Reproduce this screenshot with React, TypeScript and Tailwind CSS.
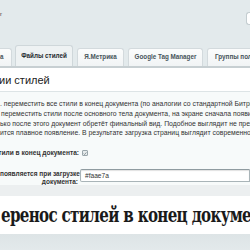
import React from "react";

const Tab = ({ label, active, className = "" }: { label: string; active?: boolean; className?: string }) => (
  <div
    className={
      "shrink-0 flex items-center justify-center rounded-t-[3px] border border-b-0 whitespace-nowrap " +
      (active
        ? "h-[21px] bg-[#eef2f3] border-[#cfd7da] text-[#1f2b30] font-bold"
        : "h-[18px] bg-gradient-to-b from-[#fbfcfc] to-[#f1f4f5] border-[#d3dadd] text-[#46545a] font-bold") +
      " " +
      className
    }
  >
    <span className="text-[6.3px] leading-none">{label}</span>
  </div>
);

export default function App() {
  return (
    <div
      className="w-[250px] h-[250px] overflow-hidden bg-[#e3eaec] flex flex-col"
      style={{ fontFamily: '"Liberation Sans", Arial, sans-serif' }}
    >
      {/* top area */}
      <div className="h-[45px] flex justify-between items-start pt-[11px] shrink-0">
        <span className="text-[6px] leading-none text-[#333]">г</span>
        <div className="w-[4px] h-[13px] mt-[1px] rounded-l-[3px] border border-r-0 border-[#c4cdd0] bg-white" />
      </div>

      {/* tabs */}
      <div className="h-[21px] flex items-end gap-[4px] shrink-0">
        <div className="shrink-0 h-[18px] w-[12px] flex items-center rounded-tr-[3px] border border-l-0 border-b-0 border-[#d3dadd] bg-gradient-to-b from-[#fbfcfc] to-[#f1f4f5]">
          <span className="text-[6.3px] leading-none font-bold text-[#46545a]">а</span>
        </div>
        <Tab label="Файлы стилей" active className="w-[58px] ml-[-1px]" />
        <Tab label="Я.Метрика" className="w-[47px]" />
        <Tab label="Google Tag Manager" className="w-[75px]" />
        <Tab label="Группы поле" className="w-[60px] justify-start pl-[7px]" />
      </div>
      <div className="h-[2px] bg-[#c7cfd2] shrink-0" />

      {/* content panel */}
      <div className="bg-white shrink-0 h-[117px] flex flex-col border-b border-[#d5dcde]">
        <div className="h-[24px] flex items-center border-b border-[#dde4e6] shrink-0">
          <span className="text-[11px] leading-none text-[#222] ml-[-1px] pt-[2px]">ии стилей</span>
        </div>
        <div className="bg-[#f7fafa] flex-1 flex flex-col">
          <div className="pt-[7px] text-[6.85px] leading-[9.8px] text-[#333] whitespace-nowrap">
            <div>. переместить все стили в конец документа (по аналогии со стандартной Битрикс</div>
            <div className="pl-[1px]">переместить стили после основного тела документа, на экране сначала появится</div>
            <div>ько после этого документ обретёт финальный вид. Подобное выглядит не презентабельно</div>
            <div>ится плавное появление. В результате загрузка страниц выглядит современно и</div>
          </div>
          <div className="mt-[10px] flex items-center h-[10px]">
            <div className="w-[79px] text-right text-[6.6px] font-bold text-[#333] whitespace-nowrap overflow-hidden flex justify-end">
              <span>стили в конец документа:</span>
            </div>
            <div className="ml-[3px] w-[6px] h-[6px] rounded-[1px] border border-[#9aa6ab] bg-[#e6ebec] flex items-center justify-center">
              <svg width="5" height="5" viewBox="0 0 10 10">
                <path d="M1.5 5.2 L4 7.6 L8.6 2.2" fill="none" stroke="#6f7c82" strokeWidth="1.8" />
              </svg>
            </div>
          </div>
          <div className="mt-[12px] flex items-start">
            <div className="w-[78px] text-right text-[6.5px] leading-[8px] font-bold text-[#333] whitespace-nowrap">
              <div>появляется при загрузке</div>
              <div>документа:</div>
            </div>
            <div className="ml-[2px] flex-1 h-[13px] mt-[-1px] border border-[#a9b4b8] border-t-[#8f9ba0] rounded-l-[2px] bg-white shadow-[inset_0_1px_1px_rgba(0,0,0,0.12)] flex items-center pl-[4px]">
              <span className="text-[6.6px] text-[#333]">#faae7a</span>
            </div>
          </div>
        </div>
      </div>

      {/* gray gap */}
      <div className="h-[11px] bg-[#eceff0] shrink-0" />

      {/* caption band */}
      <div className="h-[38px] bg-white flex items-center shrink-0 overflow-hidden">
        <span
          className="text-[20px] font-bold text-[#1a1a1a] whitespace-nowrap leading-none ml-[1px] tracking-[-0.9px] scale-x-[0.755] origin-left"
          style={{ fontFamily: '"DejaVu Serif", serif' }}
        >
          еренос стилей в конец документа
        </span>
      </div>

      <div className="flex-1 bg-gradient-to-b from-[#dde4e6] to-[#e3e9eb]" />
    </div>
  );
}
